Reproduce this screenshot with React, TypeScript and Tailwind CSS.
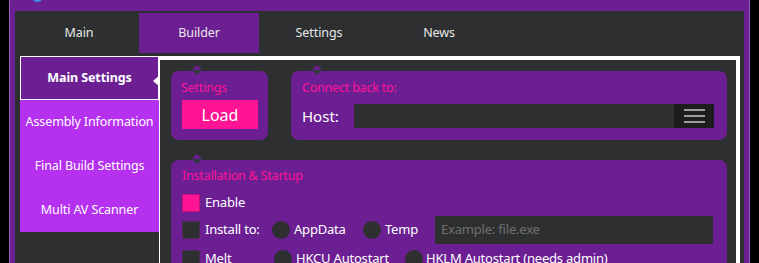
import React from "react";

const font = { fontFamily: '"Noto Sans", "Open Sans", sans-serif' };

function Notch({ left }: { left: number }) {
  return (
    <svg
      width="10"
      height="10"
      viewBox="0 0 10 10"
      className="absolute top-[-6px]"
      style={{ left }}
    >
      <polygon points="5,0 10,5 0,5" fill="#6c1f93" />
      <polygon points="0,5 10,5 5,10" fill="#2f3b3c" />
    </svg>
  );
}

function Check({ on }: { on?: boolean }) {
  return (
    <div
      className={
        on
          ? "w-[18px] h-[18px] shrink-0 bg-[#ff1493] border border-[#c2127a]"
          : "w-[18px] h-[18px] shrink-0 bg-[#2d2f30] border border-[#4e2a55]"
      }
    />
  );
}

function Radio() {
  return <div className="w-[18px] h-[18px] shrink-0 rounded-full bg-[#2d2f30]" />;
}

export default function App() {
  const tabs = ["Main", "Builder", "Settings", "News"];
  return (
    <div
      className="w-[759px] h-[263px] bg-black overflow-hidden text-[#e8e8e8]"
      style={font}
    >
      <div className="ml-[9px] w-[741px] h-[263px] bg-[#6c1f93] border-x border-[#9b5cbb] flex flex-col overflow-hidden">
        {/* title bar */}
        <div className="h-[11px] shrink-0 relative">
          <div className="absolute left-[22px] top-[-9px] w-[11px] h-[11px] rounded-full bg-[#3b8ee8]" />
        </div>
        {/* tab control */}
        <div className="mx-[5px] flex-1 bg-[#2d2f30] flex flex-col min-h-0">
          <div className="h-[42px] shrink-0 pt-[2px] pl-[4px] flex">
            {tabs.map((t) => (
              <div
                key={t}
                className={
                  "w-[120px] h-[40px] flex items-center justify-center text-[12.5px] tracking-[-0.1px] " +
                  (t === "Builder" ? "bg-[#6c1f93]" : "")
                }
              >
                {t}
              </div>
            ))}
          </div>
          <div className="h-[3px] shrink-0" />
          <div className="ml-[5px] mr-[4px] flex flex-1 min-h-0">
            {/* sidebar */}
            <div className="w-[139px] shrink-0 flex flex-col text-[12.5px] tracking-[-0.1px] text-white">
              <div className="h-[44px] shrink-0 bg-[#6c1f93] border border-white flex items-center justify-center font-bold relative">
                Main Settings
                <svg
                  width="7"
                  height="12"
                  viewBox="0 0 7 12"
                  className="absolute right-[-2px] top-[18px]"
                >
                  <polygon points="0,6 7,0 7,12" fill="#ffffff" />
                </svg>
              </div>
              <div className="bg-[#b530ef] shrink-0">
                <div className="h-[44px] flex items-center justify-center">
                  Assembly Information
                </div>
                <div className="h-[44px] flex items-center justify-center">
                  Final Build Settings
                </div>
                <div className="h-[44px] flex items-center justify-center">
                  Multi AV Scanner
                </div>
              </div>
            </div>
            {/* content */}
            <div className="flex-1 bg-white pl-px pt-[4px] pr-[4px] flex min-h-0">
              <div className="flex-1 bg-[#2d2f30] pl-[11px] pt-[11px] pr-[9px] flex flex-col gap-[20px] min-h-0 overflow-hidden">
                <div className="flex gap-[23px] h-[69px] shrink-0">
                  <div className="w-[97px] bg-[#6c1f93] rounded-[8px] relative pl-[10px] pt-[8px]">
                    <Notch left={21} />
                    <div className="text-[12.5px] tracking-[-0.2px] leading-[18px] text-[#ff1493]">
                      Settings
                    </div>
                    <div className="mt-[3px] ml-[1px] w-[76px] h-[29px] bg-[#ff1493] flex items-center justify-center text-[16px] text-white">
                      Load
                    </div>
                  </div>
                  <div className="flex-1 bg-[#6c1f93] rounded-[8px] relative pl-[11px] pr-[13px] pt-[8px]">
                    <Notch left={21} />
                    <div className="text-[12.5px] tracking-[-0.2px] leading-[18px] text-[#ff1493]">
                      Connect back to:
                    </div>
                    <div className="mt-[7px] flex items-center">
                      <div className="w-[52px] text-[15px] text-white">
                        Host:
                      </div>
                      <div className="flex-1 h-[24px] bg-[#2d2f30] flex justify-end">
                        <div className="w-[40px] h-[24px] bg-[#1c1d1e] flex flex-col items-center justify-center gap-[4px]">
                          <div className="w-[21px] h-[2px] bg-[#9c9c9c]" />
                          <div className="w-[21px] h-[2px] bg-[#9c9c9c]" />
                          <div className="w-[21px] h-[2px] bg-[#9c9c9c]" />
                        </div>
                      </div>
                    </div>
                  </div>
                </div>
                <div className="h-[140px] shrink-0 bg-[#6c1f93] rounded-t-[8px] relative pl-[11px] pr-[14px] pt-[7px] text-[13px] tracking-[-0.2px] text-white">
                  <Notch left={21} />
                  <div className="text-[12.5px] leading-[18px] text-[#ff1493]">
                    Installation &amp; Startup
                  </div>
                  <div className="mt-[9px] flex items-center h-[18px] gap-[5px]">
                    <Check on />
                    <span>Enable</span>
                  </div>
                  <div className="mt-[4px] flex items-center h-[28px]">
                    <Check />
                    <span className="ml-[5px] w-[67px]">Install to:</span>
                    <Radio />
                    <span className="ml-[4px] w-[69px]">AppData</span>
                    <Radio />
                    <span className="ml-[4px] w-[50px]">Temp</span>
                    <div className="flex-1 h-[28px] bg-[#2d2f30] flex items-center pl-[6px] text-[#6f6f6f]">
                      Example: file.exe
                    </div>
                  </div>
                  <div className="mt-[6px] flex items-center h-[18px]">
                    <Check />
                    <span className="ml-[5px] w-[69px]">Melt</span>
                    <Radio />
                    <span className="ml-[4px] w-[109px]">HKCU Autostart</span>
                    <Radio />
                    <span className="ml-[3px]">HKLM Autostart (needs admin)</span>
                  </div>
                </div>
              </div>
            </div>
          </div>
        </div>
      </div>
    </div>
  );
}
